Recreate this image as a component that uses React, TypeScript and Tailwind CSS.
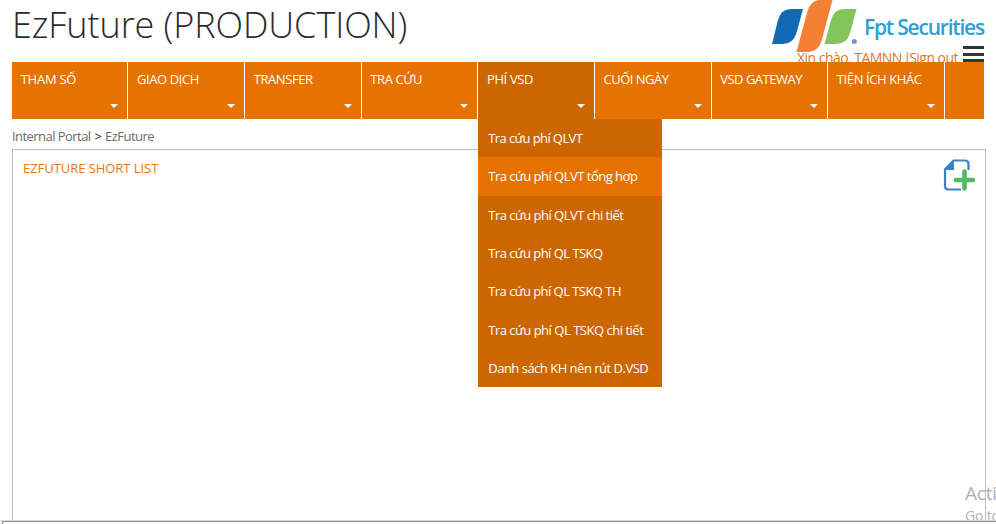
const menu = [
  { label: "THAM SỐ", track: "tracking-[-0.25px]" },
  { label: "GIAO DỊCH", track: "tracking-[-0.4px]" },
  { label: "TRANSFER", track: "tracking-[-0.4px]" },
  { label: "TRA CỨU", track: "tracking-[-0.4px]" },
  { label: "PHÍ VSD", track: "tracking-[-0.35px]" },
  { label: "CUỐI NGÀY", track: "tracking-[-0.5px]" },
  { label: "VSD GATEWAY", track: "tracking-[-0.5px]" },
  { label: "TIỆN ÍCH KHÁC", track: "tracking-[-0.4px]" },
];

const feeItems = [
  { label: "Tra cứu phí QLVT", track: "tracking-[-0.6px]" },
  { label: "Tra cứu phí QLVT tổng hợp", track: "tracking-[-0.5px]" },
  { label: "Tra cứu phí QLVT chi tiết", track: "tracking-[-0.5px]" },
  { label: "Tra cứu phí QL TSKQ", track: "tracking-[-0.53px]" },
  { label: "Tra cứu phí QL TSKQ TH", track: "tracking-[-0.54px]" },
  { label: "Tra cứu phí QL TSKQ chi tiết", track: "tracking-[-0.48px]" },
  { label: "Danh sách KH nên rút D.VSD", track: "tracking-[-0.5px]" },
];

function Logo() {
  return (
    <svg className="absolute left-[771px] top-0 h-[53px] w-[90px]" viewBox="0 0 90 53">
      <path d="M20 9H32L25.500 33Q22 44 12 44H1L7 20Q10 9 20 9Z" fill="#116ab3" />
      <path d="M73 9H85.500L79 33Q76 44 65 44H53.500L60 20Q63 9 73 9Z" fill="#85c45b" />
      <path d="M48 0H61.500L50.500 41Q47 52 37 52H25.500L36.500 11Q39.500 1 48 0Z" fill="#f58034" />
      <circle cx="83.300" cy="41.500" r="2.500" fill="#7f8fc4" />
    </svg>
  );
}

function AddFileIcon() {
  return (
    <svg className="h-[34px] w-[34px]" viewBox="0 0 34 34" fill="none">
      <path
        d="M25.500 12V6Q25.500 2.500 22 2.500H10.500L2 11.500V28Q2 31.500 5.500 31.500H18"
        stroke="#3d80c3"
        strokeWidth="2.200"
      />
      <path d="M11 2V12H2Z" fill="#3d80c3" />
      <path d="M21.500 13.500V30.500M13 22H30" stroke="#55b963" strokeWidth="4.600" strokeLinecap="round" />
    </svg>
  );
}

export default function App() {
  return (
    <div className="relative flex h-[524px] w-[996px] flex-col overflow-hidden bg-white font-['Open_Sans','Noto_Sans',sans-serif] text-[13px]">
      <header className="relative h-[62px] shrink-0 overflow-hidden">
        <h1 className="pl-[12px] pt-[1px] text-[36px] font-light leading-[48px] tracking-[-0.08px] text-[#2b2b2b] whitespace-nowrap">
          EzFuture (PRODUCTION)
        </h1>
        <Logo />
        <span className="absolute left-[864px] top-[12px] whitespace-nowrap text-[21px] font-semibold leading-[30px] tracking-[-1.2px] text-[#2d9fd6]">
          Fpt Securities
        </span>
        <span className="absolute left-[797px] top-[48px] whitespace-nowrap text-[14px] leading-[20px] tracking-[-0.53px] text-[#e0771b]">
          Xin chào, TAMNN <span className="-mx-[1.500px]">|</span>Sign out
        </span>
        <div className="absolute left-[963px] top-[46px] flex h-[16px] w-[21px] flex-col justify-between">
          <i className="h-[3px] bg-[#333]" />
          <i className="h-[3px] bg-[#333]" />
          <i className="h-[3px] bg-[#333]" />
        </div>
      </header>

      <nav className="ml-[12px] flex h-[57px] w-[972px] shrink-0 bg-[#e67300] text-white">
        {menu.map((m, i) => (
          <div
            key={m.label}
            className={`relative flex shrink-0 flex-col border-r border-white ${i === 0 ? "w-[116.3px]" : "w-[116.65px]"} ${i === 4 ? "bg-[#cc6600]" : ""}`}
          >
            <span className={`whitespace-nowrap pl-[8.700px] pt-[8px] leading-[18px] ${m.track}`}>{m.label}</span>
            <i className="mr-[9px] mt-[16px] h-0 w-0 self-end border-x-[4px] border-t-[4.500px] border-x-transparent border-t-white" />
            {i === 4 && (
              <ul className="absolute left-0 top-[57px] z-10 w-[184px] bg-[#cc6600]">
                {feeItems.map((f, n) => (
                  <li
                    key={f.label}
                    className={`h-[38.350px] whitespace-nowrap pl-[10px] leading-[39.300px] ${n === 1 ? "bg-[#e67300]" : ""} ${f.track}`}
                  >
                    {f.label}
                  </li>
                ))}
              </ul>
            )}
          </div>
        ))}
      </nav>

      <div className="h-[30px] shrink-0 whitespace-nowrap pl-[12px] pt-[8px] leading-[18px] tracking-[-0.55px] text-[#6b6b6b]">
        Internal Portal <span className="mx-[1px] text-[#222]">&gt;</span> EzFuture
      </div>

      <main className="ml-[12px] flex h-[371px] w-[974px] shrink-0 items-start justify-between border border-b-0 border-[#bdbdbd] pl-[10px] pr-[8px]">
        <h2 className="whitespace-nowrap pt-[9px] leading-[18px] tracking-[-0.05px] text-[#e67817]">EZFUTURE SHORT LIST</h2>
        <div className="pt-[8px]">
          <AddFileIcon />
        </div>
      </main>
      <footer className="h-[4px] shrink-0 border-t border-[#d9d9d9] pl-[2px]">
        <div className="h-[3px] border-l border-t border-[#8a8a8a] bg-white" />
      </footer>

      <div className="absolute left-[965px] top-[480px] h-[40px] w-[31px] overflow-hidden whitespace-nowrap text-[#b0b0b0]">
        <p className="text-[19px] leading-[26px] tracking-[-0.2px]">Acti</p>
        <p className="text-[14px] leading-[19px] tracking-[-0.2px]">Go to</p>
      </div>
    </div>
  );
}
